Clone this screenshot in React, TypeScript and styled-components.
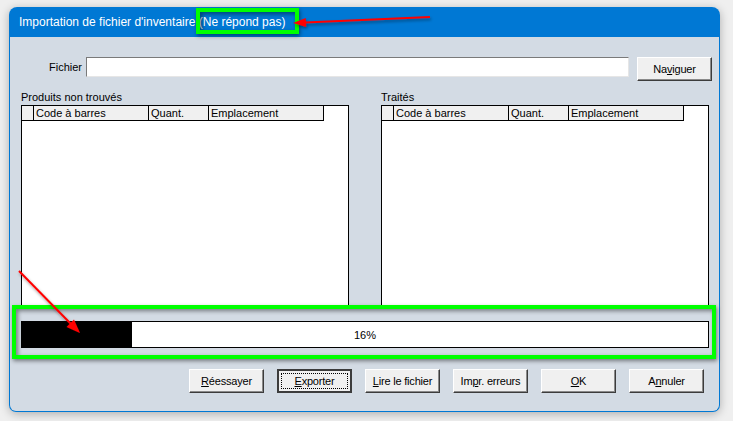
import React from "react";
import styled, { createGlobalStyle, css } from "styled-components";

const GlobalStyle = createGlobalStyle`
  html, body {
    margin: 0;
    padding: 0;
    background: #efefef;
  }
  body {
    font-family: "Liberation Sans", Arial, sans-serif;
  }
`;

const Screen = styled.div`
  position: relative;
  width: 733px;
  height: 421px;
  padding: 7px 0 0 9px;
  box-sizing: border-box;
  overflow: hidden;
`;

const Window = styled.div`
  width: 711px;
  height: 405px;
  display: flex;
  flex-direction: column;
  border-radius: 8px;
  box-shadow: 0 2px 10px rgba(0, 0, 0, 0.28);
`;

const TitleBar = styled.div`
  flex: none;
  height: 30px;
  background: #0078d4;
  border-radius: 8px 8px 0 0;
  color: #fff;
  font-size: 12px;
  display: flex;
  align-items: center;
  padding-left: 10px;
`;

const Body = styled.div`
  flex: 1;
  min-height: 0;
  background: #d3dbe4;
  border: 1px solid #0078d4;
  border-top: none;
  border-radius: 0 0 7px 7px;
  padding: 20px 10px 0 11px;
  display: flex;
  flex-direction: column;
  font-size: 11px;
  color: #000;
`;

const FileRow = styled.div`
  display: flex;
  align-items: flex-start;
  height: 24px;
  margin-right: -3px;
`;

const FileLabel = styled.label`
  width: 61px;
  margin-right: 4px;
  text-align: right;
  line-height: 20px;
`;

const FileInput = styled.div`
  flex: 1;
  height: 20px;
  box-sizing: border-box;
  background: #fff;
  border: 1px solid;
  border-color: #7a7a7a #e6e6e6 #e6e6e6 #7a7a7a;
  margin-right: 8px;
`;

const buttonFace = css`
  width: 75px;
  height: 24px;
  box-sizing: border-box;
  padding: 0;
  background: #f0f0f0;
  border: 1px solid;
  border-color: #fff #3c3c3c #3c3c3c #fff;
  box-shadow: inset -1px -1px 0 #8a8a8a;
  font-family: "Liberation Sans", Arial, sans-serif;
  font-size: 11px;
  letter-spacing: -0.2px;
  color: #000;
  display: flex;
  align-items: center;
  justify-content: center;
  position: relative;
`;

const Button = styled.button<{ $default?: boolean }>`
  ${buttonFace}
  ${(p) =>
    p.$default &&
    css`
      border: 2px solid #3c3c3c;
      box-shadow: none;
      &::after {
        content: "";
        position: absolute;
        inset: 2px;
        border: 1px dotted #000;
      }
    `}
`;

const Panels = styled.div`
  display: flex;
  justify-content: space-between;
  margin-top: 10px;
`;

const Panel = styled.div`
  width: 328px;
  display: flex;
  flex-direction: column;
`;

const PanelLabel = styled.div`
  height: 14px;
  line-height: 12px;
`;

const Table = styled.div`
  height: 201px;
  box-sizing: border-box;
  background: #fff;
  border: 1px solid #000;
  border-bottom: none;
`;

const HeaderRow = styled.div`
  display: grid;
  grid-template-columns: 12px 115px 60px 115px;
  height: 15px;
`;

const HeaderCell = styled.div`
  background: #f0f0f0;
  border-right: 1px solid #000;
  border-bottom: 1px solid #000;
  padding-left: 2px;
  line-height: 14px;
  white-space: nowrap;
  overflow: hidden;
`;

const Progress = styled.div`
  margin-top: 15px;
  height: 27px;
  box-sizing: border-box;
  border: 1px solid #000;
  background: #fff;
  display: grid;
`;

const ProgressFill = styled.div`
  grid-area: 1 / 1;
  justify-self: start;
  height: 100%;
  background: #000;
`;

const ProgressText = styled.div`
  grid-area: 1 / 1;
  justify-self: center;
  align-self: center;
`;

const ButtonRow = styled.div`
  display: flex;
  justify-content: flex-end;
  gap: 13px;
  margin-top: 21px;
  padding-right: 5px;
`;

const Highlight = styled.div<{ $x: number; $y: number; $w: number; $h: number }>`
  position: absolute;
  left: ${(p) => p.$x}px;
  top: ${(p) => p.$y}px;
  width: ${(p) => p.$w}px;
  height: ${(p) => p.$h}px;
  box-sizing: border-box;
  border: 4px solid #0f0;
  box-shadow: 1px 2px 4px rgba(0, 0, 0, 0.45),
    inset 2px 2px 4px rgba(0, 0, 0, 0.45);
  pointer-events: none;
`;

const Annotations = styled.svg`
  position: absolute;
  left: 0;
  top: 0;
  pointer-events: none;
`;

const columns = ["Code à barres", "Quant.", "Emplacement"];

const ListPanel = ({ title }: { title: string }) => (
  <Panel>
    <PanelLabel>{title}</PanelLabel>
    <Table>
      <HeaderRow>
        <HeaderCell />
        {columns.map((c) => (
          <HeaderCell key={c}>{c}</HeaderCell>
        ))}
      </HeaderRow>
    </Table>
  </Panel>
);

const progress = 16;

export default function App() {
  return (
    <>
      <GlobalStyle />
      <Screen>
        <Window>
          <TitleBar>Importation de fichier d'inventaire (Ne répond pas)</TitleBar>
          <Body>
            <FileRow>
              <FileLabel>Fichier</FileLabel>
              <FileInput />
              <Button>
                Na<u>v</u>iguer
              </Button>
            </FileRow>
            <Panels>
              <ListPanel title="Produits non trouvés" />
              <ListPanel title="Traités" />
            </Panels>
            <Progress>
              <ProgressFill style={{ width: `${progress}%` }} />
              <ProgressText>{progress}%</ProgressText>
            </Progress>
            <ButtonRow>
              <Button>
                <u>R</u>éessayer
              </Button>
              <Button $default>
                <u>E</u>xporter
              </Button>
              <Button>
                <u>L</u>ire le fichier
              </Button>
              <Button>
                Im<u>p</u>r. erreurs
              </Button>
              <Button>
                <u>O</u>K
              </Button>
              <Button>
                A<u>n</u>nuler
              </Button>
            </ButtonRow>
          </Body>
        </Window>

        <Highlight $x={196} $y={8} $w={103} $h={26} />
        <Highlight $x={12} $y={305} $w={704} $h={54} />

        <Annotations width="733" height="421" viewBox="0 0 733 421">
          <defs>
            <filter id="shade" x="-20%" y="-20%" width="140%" height="140%">
              <feDropShadow dx="1" dy="2" stdDeviation="1.5" floodColor="#000" floodOpacity="0.4" />
            </filter>
          </defs>
          <g filter="url(#shade)" fill="#f00" stroke="#f00">
            <line x1="430" y1="17" x2="305" y2="22.5" strokeWidth="2" />
            <polygon points="293,23 306.2,27 305.8,18" stroke="none" />
            <line x1="19" y1="271" x2="71" y2="324" strokeWidth="2" />
            <polygon points="80,333 74,319.5 66.5,327" stroke="none" />
          </g>
        </Annotations>
      </Screen>
    </>
  );
}
